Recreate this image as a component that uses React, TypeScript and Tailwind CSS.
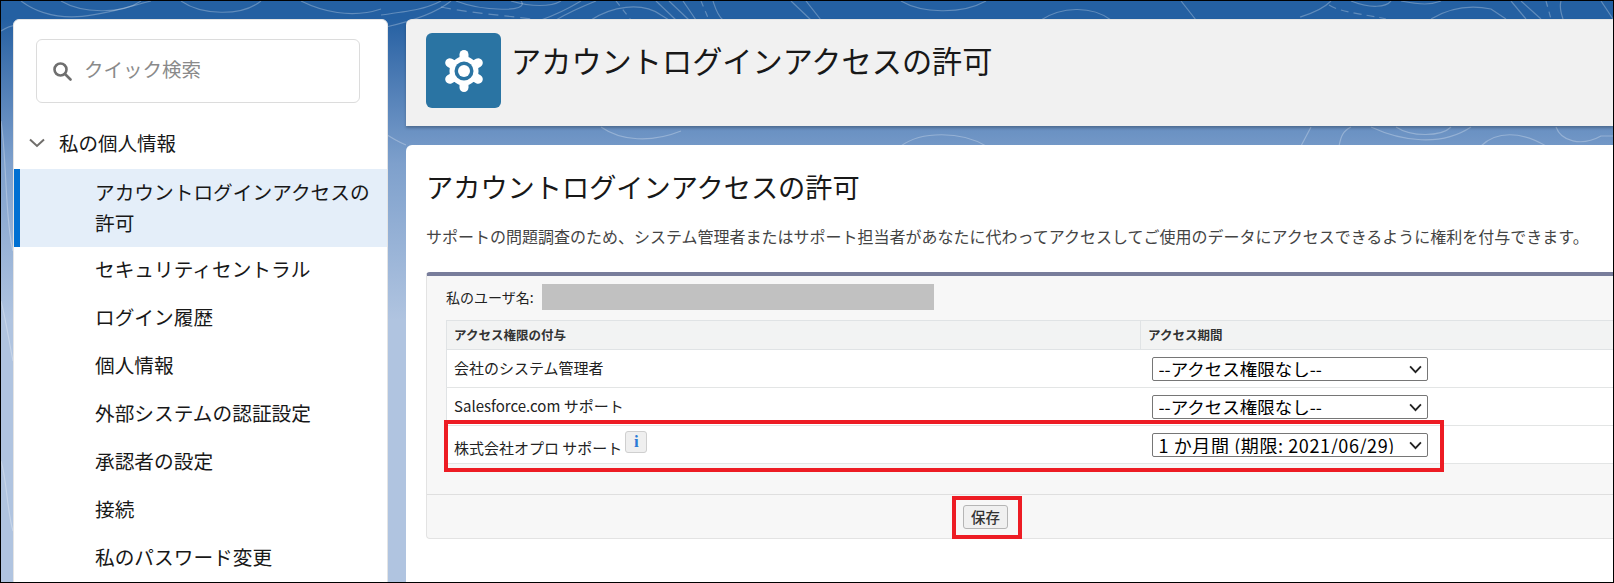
const FONT = "font-['Noto_Sans_CJK_JP','Liberation_Sans',sans-serif]";

const menuItems = [
  "セキュリティセントラル",
  "ログイン履歴",
  "個人情報",
  "外部システムの認証設定",
  "承認者の設定",
  "接続",
  "私のパスワード変更",
];

const Topo = () => (
  <svg
    className="absolute inset-0 w-full h-full"
    viewBox="0 0 1612 581"
    fill="none"
    stroke="#ffffff"
    strokeOpacity="0.28"
    strokeWidth="1.2"
  >
    <path d="M0 30 C30 10 40 50 13 70" />
    <path d="M20 0 C60 30 110 10 150 0" />
    <path d="M60 0 C80 12 120 14 140 0" />
    <path d="M180 0 C200 14 240 16 260 0" />
    <path d="M300 0 C320 10 350 18 380 8" />
    <path d="M380 14 C410 10 425 8 440 0" />
    <path d="M385 26 C420 18 440 8 450 0" />
    <path d="M440 6 C470 12 500 14 530 18" strokeDasharray="10 6" />
    <path d="M455 0 C480 10 530 12 520 0" />
    <path d="M510 0 C530 6 550 6 560 0" />
    <path d="M540 19 C560 12 570 6 580 0" />
    <path d="M555 19 C570 10 585 4 595 0" />
    <path d="M590 19 C610 6 640 0 660 14 L668 19" />
    <path d="M615 0 L630 19" strokeDasharray="6 5" />
    <path d="M655 0 L675 19" />
    <path d="M668 0 L688 19" />
    <path d="M682 0 L695 19" />
    <path d="M700 0 L708 19" strokeDasharray="6 5" />
    <path d="M712 0 C714 6 716 14 722 19" />
    <path d="M790 0 L810 19" />
    <path d="M805 0 L820 19" />
    <path d="M900 0 C920 12 960 14 985 0" />
    <path d="M1040 19 C1060 6 1090 4 1110 19" />
    <path d="M1180 0 L1195 19" />
    <path d="M1330 0 C1320 10 1305 14 1299 16" />
    <path d="M1328 4 C1340 12 1370 14 1385 18" strokeDasharray="8 5" />
    <path d="M1350 0 C1370 8 1385 6 1390 0" />
    <path d="M1400 0 C1420 4 1430 4 1440 0" />
    <path d="M1430 18 C1450 6 1470 4 1490 8 L1505 18" />
    <path d="M1510 0 L1525 18" />
    <path d="M1520 0 L1540 18" />
    <path d="M1545 0 L1550 18" strokeDasharray="6 5" />
    <path d="M1560 0 C1558 6 1560 12 1562 18" />
    <path d="M1600 0 L1612 18" />
    <path d="M376 60 C385 80 390 110 376 130" />
    <path d="M380 130 C395 140 400 142 405 144" />
    <path d="M0 120 C6 160 4 220 12 250" />
    <path d="M0 300 C5 320 8 340 12 360" />
    <path d="M0 460 C6 480 6 510 12 530" />
    <path d="M1370 126 C1400 140 1440 146 1470 126" />
    <path d="M1395 126 C1410 136 1440 136 1450 126" />
    <path d="M1480 145 C1495 130 1520 130 1545 145" />
    <path d="M1555 126 C1560 140 1580 146 1600 135 L1612 135" />
    <path d="M1300 145 L1310 126" />
    <path d="M1338 145 C1340 135 1342 130 1350 126" />
    <path d="M600 126 C620 140 650 142 680 130" />
    <path d="M900 145 C920 130 960 130 985 145" />
  </svg>
);

const Gear = () => (
  <svg viewBox="-24 -24 48 48" className="w-12 h-12">
    <g stroke="#ffffff" strokeWidth="9" strokeLinecap="round">
      <line x1="0" y1="0" x2="0" y2="-16.5" />
      <line x1="0" y1="0" x2="0" y2="16.5" />
      <line x1="0" y1="0" x2="14.3" y2="-8.25" />
      <line x1="0" y1="0" x2="14.3" y2="8.25" />
      <line x1="0" y1="0" x2="-14.3" y2="-8.25" />
      <line x1="0" y1="0" x2="-14.3" y2="8.25" />
    </g>
    <circle r="14.5" fill="#ffffff" />
    <circle r="9.5" fill="#2a74a3" />
    <circle r="6" fill="#ffffff" />
  </svg>
);

const AccessSelect = ({ value, info }: { value: string; info?: boolean }) => (
  <div className="relative w-[276px] h-6">
    <select
      defaultValue={value}
      className={`appearance-none w-full h-6 leading-none text-black bg-white border border-[#767676] rounded-[2px] pl-[6px] pr-0 py-0 ${
        info ? "text-[18px] tracking-[0.6px]" : "text-[17.5px]"
      }`}
    >
      <option value={value}>{value}</option>
    </select>
    <svg
      viewBox="0 0 14 10"
      className="absolute right-[6px] top-[8px] w-[13px] h-[9px] bg-white pointer-events-none"
      fill="none"
      stroke="#222222"
      strokeWidth="2"
    >
      <path d="M1 1.5 L7 8 L13 1.5" />
    </svg>
  </div>
);

const Row = ({ label, value, info }: { label: string; value: string; info?: boolean }) => (
  <tr className="bg-white border-b border-[#e3e5e5] h-[38px]">
    <td className="pl-[7px] text-[15px] text-[#222]">
      {info ? (
        <span className="flex items-start gap-[3px] h-[28px]">
          <span className="mt-[6px]">{label}</span>
          <span className="w-[22px] h-[22px] rounded-[3px] border border-[#cfcfcf] bg-[#efefef] flex items-center justify-center text-[17px] leading-none font-bold text-[#2a7bd6] font-['Liberation_Serif',serif]">
            i
          </span>
        </span>
      ) : (
        label
      )}
    </td>
    <td className="pl-[11px]">
      <AccessSelect value={value} info={info} />
    </td>
  </tr>
);

export default function App() {
  return (
    <div
      className={`relative w-[1614px] h-[583px] overflow-hidden border border-black bg-gradient-to-b from-[#2460a2] from-[3%] via-[#7ea0cc] via-[28%] to-[#b0c4e0] to-[55%] ${FONT}`}
    >
      <Topo />
      <div className="relative flex h-full gap-[18px] pl-[12px] pt-[18px]">
        <aside className="w-[375px] h-[600px] shrink-0 bg-white rounded-t-[6px] border border-[#e4e4e4]">
          <div className="pl-[22px] pt-[19px] pr-[27px]">
            <div className="flex items-center h-16 border border-[#dcdcdc] rounded-[6px] pl-[15px] gap-[12px]">
              <svg viewBox="0 0 20 20" className="w-5 h-5 shrink-0" fill="none" stroke="#6f6f6f" strokeWidth="2.6">
                <circle cx="8.5" cy="8.5" r="6" />
                <path d="M13 13 L18.5 18.5" strokeLinecap="round" />
              </svg>
              <input
                placeholder="クイック検索"
                className="w-full bg-transparent text-[19.5px] leading-none pb-[6px] outline-none placeholder:text-[#8a8a8a]"
              />
            </div>
          </div>
          <div className="flex items-center h-[66px] pt-[13px] pl-[15px] gap-[14px] text-[19.5px] text-[#181818]">
            <svg viewBox="0 0 16 10" className="w-4 h-[10px]" fill="none" stroke="#706e6b" strokeWidth="2">
              <path d="M1 1.5 L8 8 L15 1.5" />
            </svg>
            私の個人情報
          </div>
          <div className="flex bg-[#e4eef9] border-l-[6px] border-[#0070d2] pl-[75px] pr-[12px] pb-[2px] h-[78px] items-center text-[19.7px] leading-[31px] text-[#181818]">
            アカウントログインアクセスの許可
          </div>
          <ul className="text-[19.7px] text-[#181818]">
            {menuItems.map((item) => (
              <li key={item} className="h-[48px] pb-[4px] flex items-center pl-[81px]">
                {item}
              </li>
            ))}
          </ul>
        </aside>

        <main className="flex-1 min-w-0 flex flex-col gap-[19px]">
          <header className="h-[107px] bg-[#f1f1f1] rounded-tl-[6px] border-t border-[#e4e4e4] shadow-[0_2px_3px_rgba(0,0,0,0.25)] flex items-start pl-[20px] pt-[13px] gap-[10px]">
            <div className="w-[75px] h-[75px] rounded-[6px] bg-[#2a74a3] flex items-center justify-center">
              <Gear />
            </div>
            <h1 className="text-[30.2px] leading-[54px] text-[#181818]">アカウントログインアクセスの許可</h1>
          </header>

          <section className="flex-1 bg-white rounded-tl-[6px] pl-[20px] pt-[18px]">
            <h2 className="text-[27.2px] leading-[46px] text-[#181818]">アカウントログインアクセスの許可</h2>
            <p className="mt-[14px] text-[16px] leading-[26px] text-[#444] whitespace-nowrap">
              サポートの問題調査のため、システム管理者またはサポート担当者があなたに代わってアクセスしてご使用のデータにアクセスできるように権利を付与できます。
            </p>
            <div className="mt-[23px] h-[267px] bg-[#f7f7f7] border-t-4 border-[#787d9b] border-b border-b-[#e3e3e3] border-l border-l-[#e3e3e3] rounded-[4px] rounded-r-none flex flex-col">
              <div className="flex items-center h-[42px] mb-[2px] pl-[19px] text-[14px] text-[#222]">
                <span className="w-[96px]">私のユーザ名:</span>
                <span className="w-[392px] h-[26px] bg-[#c1c1c1]" />
              </div>
              <div className="pl-[19px]">
                <table className="w-full table-fixed border-collapse border-t border-l border-[#e0e3e5]">
                  <thead>
                    <tr className="h-[29px] bg-[#f2f3f3] border-b border-[#e0e3e5] text-left text-[12.5px] font-bold text-[#333]">
                      <th className="w-[694px] pl-[7px] font-bold">アクセス権限の付与</th>
                      <th className="pl-[7px] font-bold border-l border-[#e0e3e5]">アクセス期間</th>
                    </tr>
                  </thead>
                  <tbody>
                    <Row label="会社のシステム管理者" value="--アクセス権限なし--" />
                    <Row label="Salesforce.com サポート" value="--アクセス権限なし--" />
                    <Row label="株式会社オプロ サポート" value="1 か月間 (期限: 2021/06/29)" info />
                  </tbody>
                </table>
              </div>
              <div className="mt-[30px] flex-1 border-t border-[#dfdfdf] flex items-start justify-center pt-[10px] pr-[69px]">
                <button className="h-6 w-[45px] rounded-[3px] border border-[#b5b5b5] bg-[#f0f0f0] text-[14.5px] leading-none font-medium text-[#333]">
                  保存
                </button>
              </div>
            </div>
          </section>
        </main>
      </div>

      {/* red annotation frames */}
      <div className="absolute left-[443px] top-[419px] w-[1000px] h-[52px] border-[4px] border-[#ed1c24]" />
      <div className="absolute left-[951px] top-[495px] w-[70px] h-[43px] border-[4px] border-[#ed1c24]" />
    </div>
  );
}
